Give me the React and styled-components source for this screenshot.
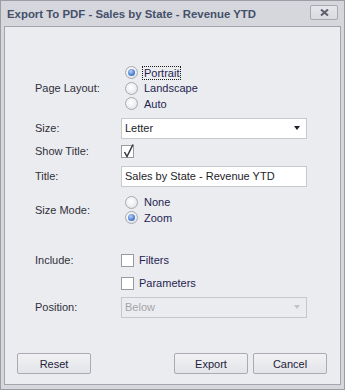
import React from 'react';
import styled, { createGlobalStyle } from 'styled-components';

const GlobalStyle = createGlobalStyle`
  body {
    margin: 0;
    font-family: "Liberation Sans", Arial, sans-serif;
  }
`;

const Window = styled.div`
  width: 345px;
  height: 390px;
  box-sizing: border-box;
  border: 1px solid #9c9da5;
  background: #d6d7dc;
  display: flex;
  flex-direction: column;
`;

const TitleBar = styled.div`
  height: 25px;
  display: flex;
  align-items: center;
  justify-content: space-between;
  padding: 0 6px 0 6px;
  box-sizing: border-box;
`;

const Caption = styled.div`
  font-size: 11.4px;
  font-weight: bold;
  color: #44506b;
  padding-top: 1px;
`;

const CloseButton = styled.div`
  width: 28px;
  height: 15px;
  box-sizing: border-box;
  border: 1px solid #a8a9b0;
  border-radius: 2px;
  background: linear-gradient(#e6e7ea, #d9dadf);
  display: flex;
  align-items: center;
  justify-content: center;
  margin-top: -2px;
`;

const Panel = styled.div`
  flex: 1;
  margin: 0 3px 4px 3px;
  border: 1px solid #a4a5ac;
  background: #ebecf0;
  display: flex;
  flex-direction: column;
`;

const Form = styled.div`
  padding: 38px 0 0 30px;
  display: flex;
  flex-direction: column;
`;

const Row = styled.div`
  display: flex;
  align-items: ${p => (p.top ? 'flex-start' : 'center')};
  margin-top: ${p => p.gap || 0}px;
  min-height: ${p => p.h || 0}px;
`;

const Label = styled.div`
  width: 86px;
  flex-shrink: 0;
  font-size: 11px;
  color: #30303a;
  line-height: 13px;
`;

const Group = styled.div`
  display: flex;
  flex-direction: column;
`;

const OptionRow = styled.div`
  display: flex;
  align-items: center;
  height: ${p => p.h || 15.5}px;
  margin-top: ${p => p.gap || 0}px;
  font-size: 11px;
  color: #1f2450;
`;

const RadioCircle = styled.div`
  width: 13px;
  height: 13px;
  box-sizing: border-box;
  border-radius: 50%;
  border: 1px solid #a9aab0;
  background: radial-gradient(circle at 45% 40%, #ffffff 0%, #f0f0f2 50%, #d6d7db 100%);
  display: flex;
  align-items: center;
  justify-content: center;
  margin: 0 6px 0 4px;
`;

const RadioDot = styled.div`
  width: 7px;
  height: 7px;
  border-radius: 50%;
  background: radial-gradient(circle at 40% 35%, #b9d2f5 0%, #4a7fd0 60%, #2a5aa8 100%);
`;

const OptionText = styled.span`
  padding: 0 1px;
  border: 1px ${p => (p.focus ? 'dotted #1a1a1a' : 'solid transparent')};
  line-height: 12px;
  margin-left: -2px;
`;

const CheckBox = styled.div`
  position: relative;
  width: 13px;
  height: 13px;
  box-sizing: border-box;
  border: 1px solid #9a9ba2;
  background: #ffffff;
  margin: 0 5px 0 0;
`;

const CheckMark = styled.svg`
  position: absolute;
  left: 0;
  top: -3px;
  overflow: visible;
`;

const Combo = styled.div`
  width: 186px;
  height: 21px;
  box-sizing: border-box;
  border: 1px solid ${p => (p.disabled ? '#c6c7cc' : '#c8c9ce')};
  background: ${p => (p.disabled ? '#ebecf0' : '#ffffff')};
  color: ${p => (p.disabled ? '#a3a4a8' : '#1e1e2a')};
  font-size: 11px;
  display: flex;
  align-items: center;
  justify-content: space-between;
  padding: 0 6px 0 3px;
`;

const Arrow = styled.div`
  width: 0;
  height: 0;
  border-left: 3.5px solid transparent;
  border-right: 3.5px solid transparent;
  border-top: 4px solid ${p => (p.disabled ? '#c2c3c8' : '#1e1e2a')};
`;

const Footer = styled.div`
  margin-top: auto;
  display: flex;
  align-items: center;
  padding: 0 12px 10px 12px;
`;

const Button = styled.div`
  width: 74px;
  height: 21px;
  box-sizing: border-box;
  border: 1px solid #aaabb2;
  border-radius: 2px;
  background: linear-gradient(#f2f2f4, #e3e4e8);
  font-size: 11px;
  color: #22223a;
  display: flex;
  align-items: center;
  justify-content: center;
  margin-left: ${p => p.gap || 0}px;
`;

const Radio = ({ checked, label, focus, gap }) => (
  <OptionRow gap={gap}>
    <RadioCircle>{checked && <RadioDot />}</RadioCircle>
    <OptionText focus={focus}>{label}</OptionText>
  </OptionRow>
);

const Check = ({ checked, label, gap }) => (
  <OptionRow gap={gap} h={13}>
    <CheckBox>
      {checked && (
        <CheckMark width="13" height="16" viewBox="0 0 13 16">
          <path d="M2.5 9 L5 13.5 L11 1.5" fill="none" stroke="#33333d" strokeWidth="1.5" />
        </CheckMark>
      )}
    </CheckBox>
    {label}
  </OptionRow>
);

const App = () => (
  <>
    <GlobalStyle />
    <Window>
      <TitleBar>
        <Caption>Export To PDF - Sales by State - Revenue YTD</Caption>
        <CloseButton>
          <svg width="9" height="7" viewBox="0 0 9 7">
            <path d="M1 0.5 L8 6.5 M8 0.5 L1 6.5" stroke="#5e5f6b" strokeWidth="2" />
          </svg>
        </CloseButton>
      </TitleBar>
      <Panel>
        <Form>
          <Row h={46}>
            <Label>Page Layout:</Label>
            <Group>
              <Radio checked focus label="Portrait" />
              <Radio label="Landscape" />
              <Radio label="Auto" />
            </Group>
          </Row>
          <Row gap={6}>
            <Label>Size:</Label>
            <Combo>
              Letter
              <Arrow />
            </Combo>
          </Row>
          <Row gap={6}>
            <Label>Show Title:</Label>
            <Check checked />
          </Row>
          <Row gap={8}>
            <Label>Title:</Label>
            <Combo>Sales by State - Revenue YTD</Combo>
          </Row>
          <Row gap={8}>
            <Label>Size Mode:</Label>
            <Group>
              <Radio label="None" />
              <Radio checked label="Zoom" />
            </Group>
          </Row>
          <Row gap={28} top>
            <Label>Include:</Label>
            <Group>
              <Check label="Filters" />
              <Check gap={10} label="Parameters" />
            </Group>
          </Row>
          <Row gap={7}>
            <Label>Position:</Label>
            <Combo disabled>
              Below
              <Arrow disabled />
            </Combo>
          </Row>
        </Form>
        <Footer>
          <Button>Reset</Button>
          <Button gap={83}>Export</Button>
          <Button gap={5}>Cancel</Button>
        </Footer>
      </Panel>
    </Window>
  </>
);

export default App;
